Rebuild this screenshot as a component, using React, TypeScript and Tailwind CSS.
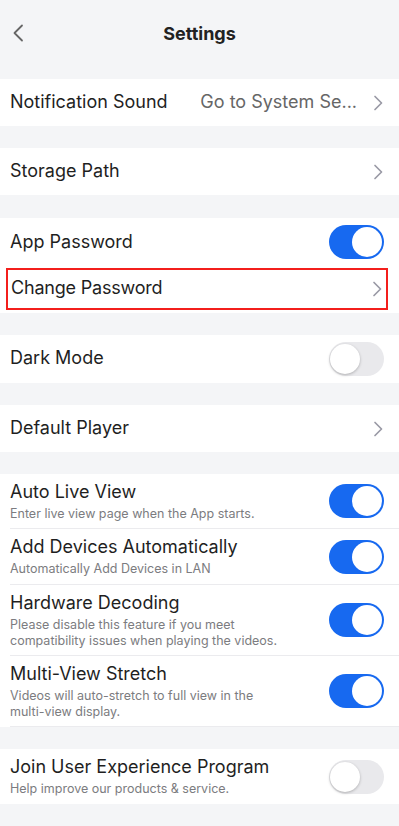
const FONT = { fontFamily: "Inter, 'Noto Sans', sans-serif" };

function Chevron() {
  return (
    <svg width="10" height="16" viewBox="0 0 10 16" fill="none" className="mt-[3px] shrink-0">
      <path d="M2 1.5 L8.5 8 L2 14.5" stroke="#9a9aa6" strokeWidth="1.7" strokeLinecap="round" strokeLinejoin="round" />
    </svg>
  );
}

function Toggle({ on }: { on: boolean }) {
  return (
    <div
      className={`relative h-[34px] w-[55px] shrink-0 rounded-full ${on ? "bg-[#1769f0]" : "bg-[#e9e9ec]"}`}
    >
      <div
        className={`absolute top-[2px] h-[30px] w-[30px] rounded-full bg-white ${
          on ? "right-[2px]" : "left-[1px] shadow-[0_1px_3px_rgba(0,0,0,0.25)]"
        }`}
      />
    </div>
  );
}

function Gap({ h }: { h: string }) {
  return <div className={h} />;
}

function NavRow({ label, value }: { label: string; value?: string }) {
  return (
    <div className="flex h-[47px] items-center bg-white pb-[3px] pl-[10px] pr-[16px]">
      <span className="flex-1 text-[18px] text-[#1f1f1f]">{label}</span>
      {value && <span className="mr-[16px] text-[18px] text-[#666]">{value}</span>}
      <Chevron />
    </div>
  );
}

function ToggleRow({
  label,
  sub,
  on,
  h,
  last,
}: {
  label: string;
  sub?: string;
  on: boolean;
  h: string;
  last?: boolean;
}) {
  return (
    <div className={`flex items-center pr-[15px] ${h} ${last ? "" : "border-b border-[#ebebee]"}`}>
      <div className="flex-1 pr-[40px]">
        <div className="text-[18px] leading-[22px] text-[#1f1f1f]">{label}</div>
        {sub && <div className="mt-[3px] text-[12.5px] leading-[16px] text-[#7c7c80]">{sub}</div>}
      </div>
      <Toggle on={on} />
    </div>
  );
}

export default function App() {
  return (
    <div className="min-h-[826px] w-full bg-[#f4f5f7]" style={FONT}>
      <div className="relative flex h-[66px] items-center justify-center">
        <svg
          width="12"
          height="18"
          viewBox="0 0 12 18"
          fill="none"
          className="absolute left-[12px] top-[24px]"
        >
          <path d="M10 1.5 L2.5 9 L10 16.5" stroke="#666" strokeWidth="1.8" strokeLinecap="round" strokeLinejoin="round" />
        </svg>
        <span className="text-[18px] font-bold text-[#222]">Settings</span>
      </div>
      <Gap h="h-[13px]" />
      <NavRow label="Notification Sound" value="Go to System Se..." />
      <Gap h="h-[22px]" />
      <NavRow label="Storage Path" />
      <Gap h="h-[23px]" />
      <div className="bg-white">
        <div className="flex h-[47px] items-center pl-[10px] pr-[15px]">
          <span className="flex-1 text-[18px] text-[#1f1f1f]">App Password</span>
          <Toggle on />
        </div>
        <div className="pb-[3px] pt-[3px]">
          <div className="ml-[6px] mr-[11px] flex h-[42px] items-center border-2 border-[#f31f1c] pb-[3px] pl-[3px] pr-[4px]">
            <span className="flex-1 text-[18px] tracking-[-0.2px] text-[#1f1f1f]">Change Password</span>
            <Chevron />
          </div>
        </div>
      </div>
      <Gap h="h-[22px]" />
      <div className="flex h-[48px] items-center bg-white pl-[10px] pr-[15px]">
        <span className="flex-1 pb-[3px] text-[18px] text-[#1f1f1f]">Dark Mode</span>
        <Toggle on={false} />
      </div>
      <Gap h="h-[22px]" />
      <NavRow label="Default Player" />
      <Gap h="h-[22px]" />
      <div className="bg-white pl-[10px]">
        <ToggleRow label="Auto Live View" sub="Enter live view page when the App starts." on h="h-[55px]" />
        <ToggleRow label="Add Devices Automatically" sub="Automatically Add Devices in LAN" on h="h-[56px]" />
        <ToggleRow
          label="Hardware Decoding"
          sub="Please disable this feature if you meet compatibility issues when playing the videos."
          on
          h="h-[71px]"
        />
        <ToggleRow
          label="Multi-View Stretch"
          sub="Videos will auto-stretch to full view in the multi-view display."
          on
          h="h-[71px]"
        />
      </div>
      <Gap h="h-[22px]" />
      <div className="bg-white pl-[10px]">
        <ToggleRow
          label="Join User Experience Program"
          sub="Help improve our products & service."
          on={false}
          h="h-[55px]"
          last
        />
      </div>
    </div>
  );
}
